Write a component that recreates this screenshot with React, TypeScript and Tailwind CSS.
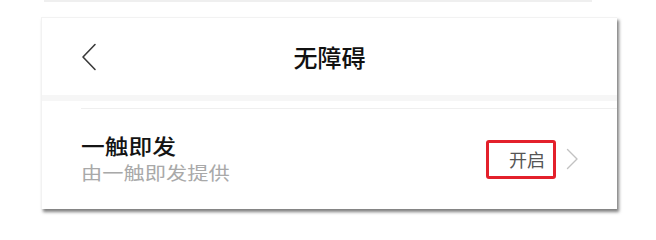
export default function App() {
  return (
    <div className="h-[225px] w-[656px] overflow-hidden bg-white font-['Noto_Sans_CJK_SC','Noto_Sans',sans-serif]">
      {/* edge of the card above */}
      <div className="ml-[44px] h-[2px] w-[548px] bg-[#efefef]" />

      <div className="ml-[41px] mt-[15px] w-[576px] border-t border-l border-[#f2f2f2] bg-white shadow-[2px_3px_3px_rgba(0,0,0,0.5)]">
        <div className="grid h-[77px] grid-cols-[1fr_auto_1fr] items-center">
          <div className="pl-[39px]">
            <svg width="16" height="28" viewBox="0 0 16 28" fill="none">
              <path d="M14 1.5 L2 14 L14 26.5" stroke="#3a3a3a" strokeWidth="1.6" strokeLinecap="round" strokeLinejoin="round" />
            </svg>
          </div>
          <h1 className="text-[24px] font-medium leading-none text-[#111111]">无障碍</h1>
          <div />
        </div>

        <div className="h-[6px] bg-[#f6f6f6]" />
        <div className="h-[7px]" />
        <div className="ml-[39px] h-px bg-[#efefef]" />

        <div className="flex h-[100px] items-center justify-between pl-[39px] pr-[38px]">
          <div className="-mt-[3px] flex flex-col">
            <span className="inline-block origin-left scale-x-[1.13] text-[21px] font-medium leading-[26px] text-[#141414]">一触即发</span>
            <span className="mt-[3px] inline-block origin-left scale-x-[1.18] text-[18px] leading-[22px] text-[#a9a9a9]">由一触即发提供</span>
          </div>

          <div className="flex items-center gap-[10px]">
            <div className="flex h-[39px] w-[70px] items-center justify-end rounded-[3px] border-[3px] border-[#e3202b] pr-[8px]">
              <span className="text-[18px] leading-none text-[#555555]">开启</span>
            </div>
            <svg width="13" height="22" viewBox="0 0 13 22" fill="none">
              <path d="M1.5 1.5 L11 11 L1.5 20.5" stroke="#c2c2c2" strokeWidth="1.4" strokeLinecap="round" strokeLinejoin="round" />
            </svg>
          </div>
        </div>
      </div>
    </div>
  )
}
